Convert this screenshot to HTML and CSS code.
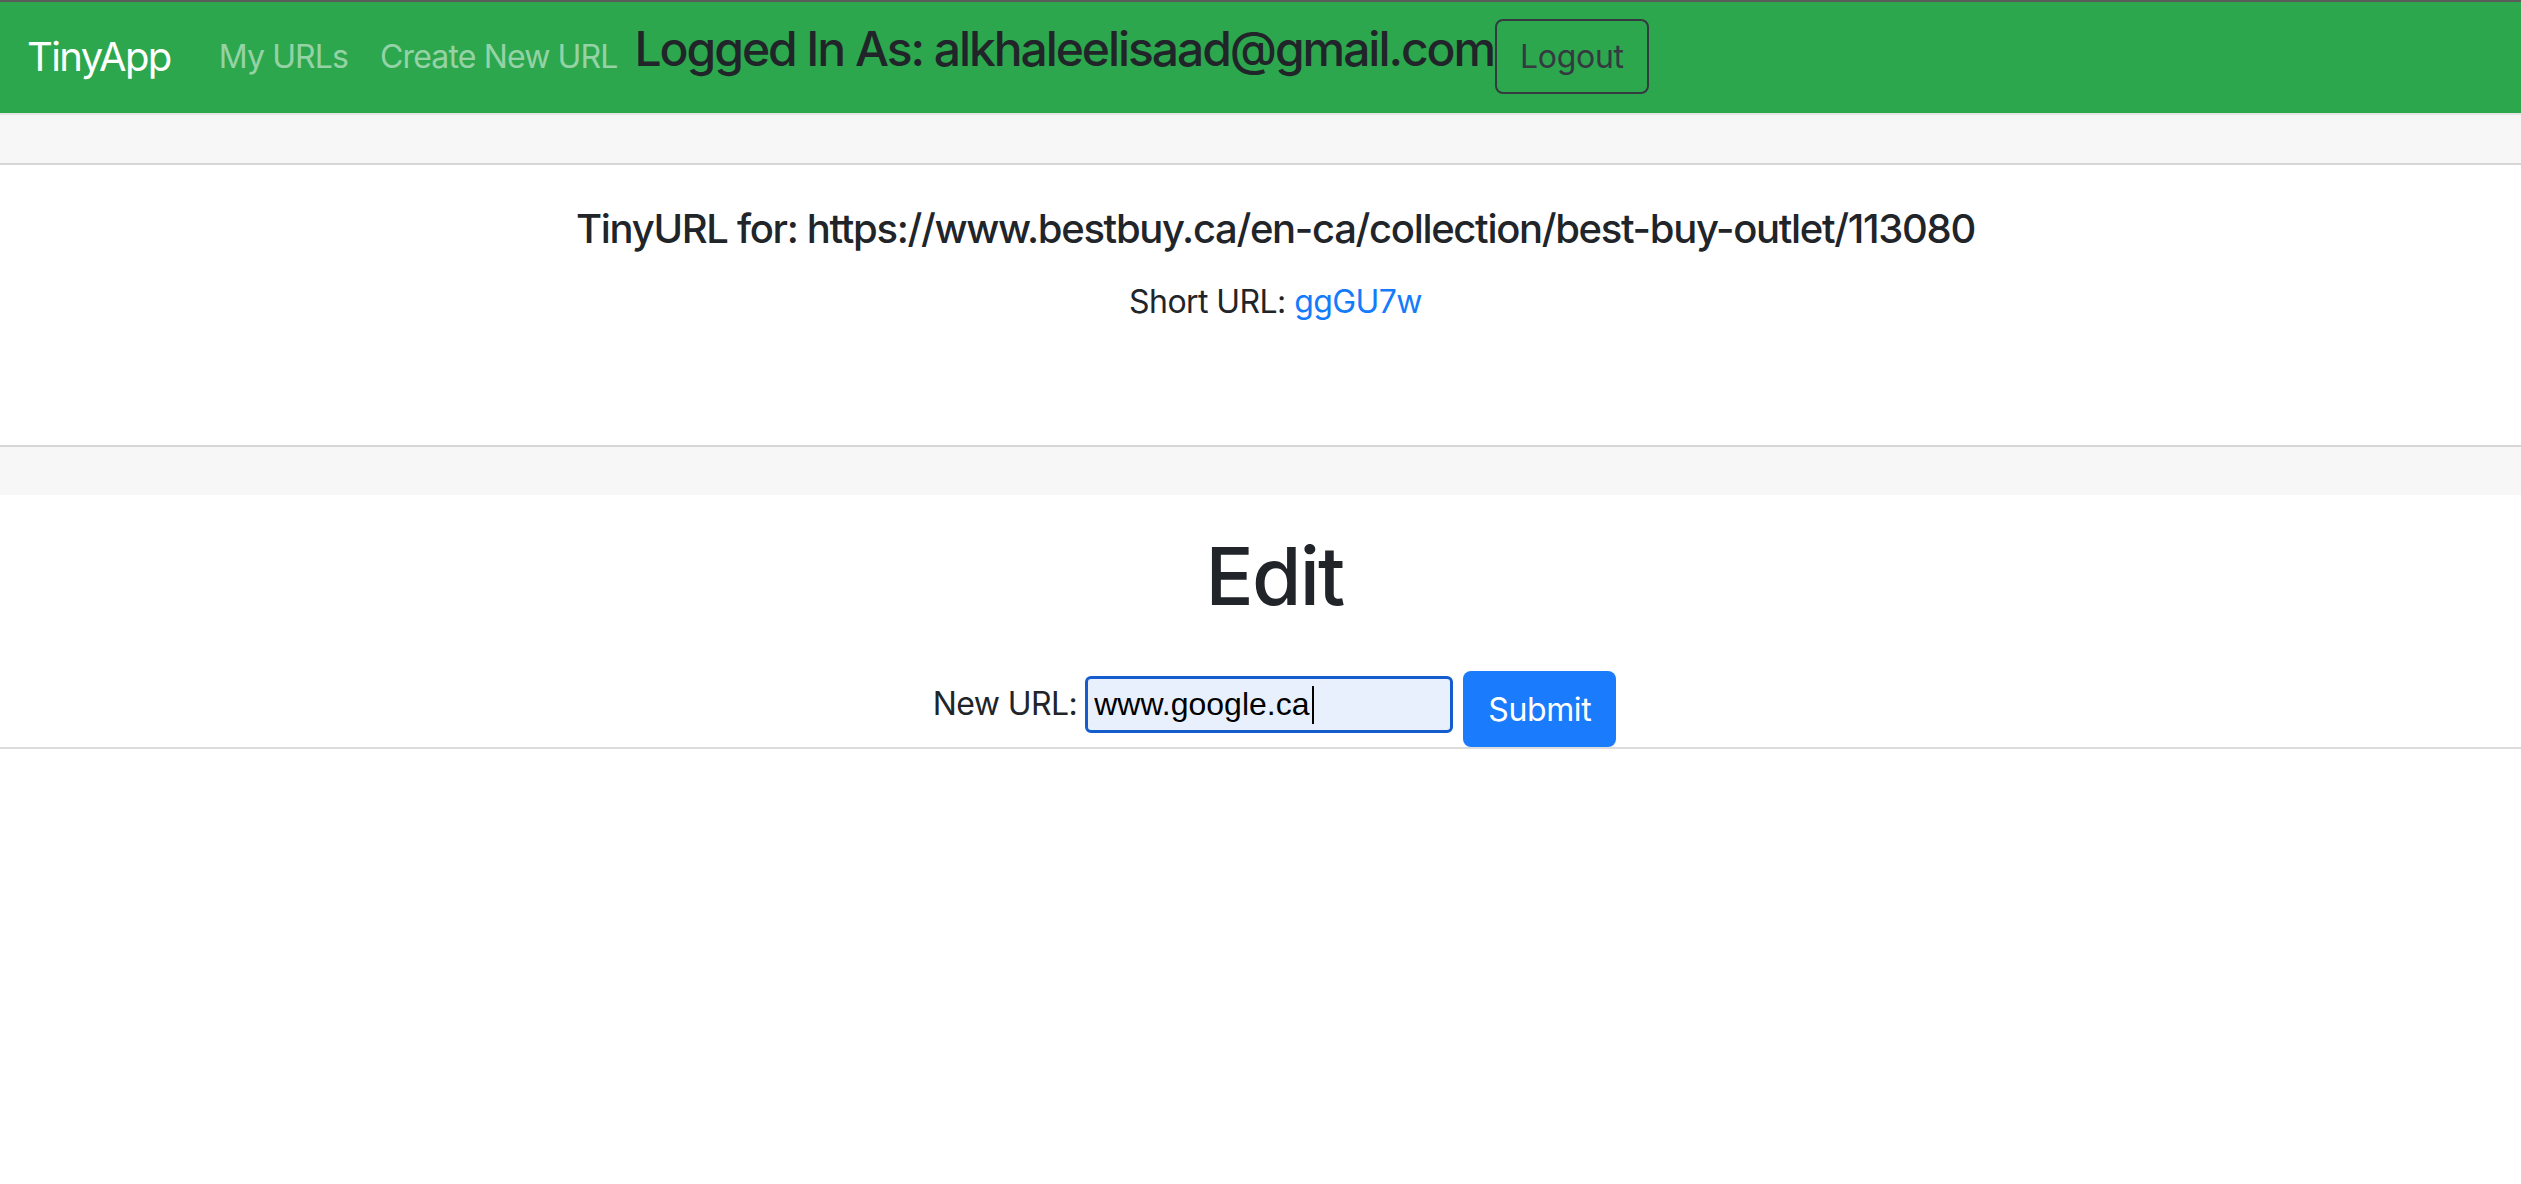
FILE: index.html
```html
<!DOCTYPE html>
<html lang="en">
<head>
<meta charset="utf-8">
<title>TinyApp</title>
<link rel="stylesheet" href="styles.css">
</head>
<body>
<header class="navbar">
  <a class="brand" href="#">TinyApp</a>
  <nav class="nav">
    <a class="nav-link" href="#">My URLs</a>
    <a class="nav-link" href="#">Create New URL</a>
  </nav>
  <h4 class="login">Logged In As: alkhaleelisaad@gmail.com</h4>
  <button class="btn-logout" type="button">Logout</button>
</header>
<main class="card">
  <div class="card-header"></div>
  <div class="card-body">
    <h5 class="card-title">TinyURL for: https://www.bestbuy.ca/en-ca/collection/best-buy-outlet/113080</h5>
    <p class="card-text">Short URL: <a class="short-link" href="#">ggGU7w</a></p>
  </div>
  <div class="card-footer"></div>
  <section class="edit">
    <h1 class="edit-title">Edit</h1>
    <form class="edit-form">
      <label class="edit-label" for="longURL">New URL:</label>
      <span class="input-wrap">
        <input class="url-input" id="longURL" type="text" name="longURL" value="www.google.ca">
        <span class="caret"></span>
      </span>
      <button class="btn-submit" type="submit">Submit</button>
    </form>
  </section>
</main>
</body>
</html>
```
FILE: styles.css
```css
* { box-sizing: border-box; }
html, body { margin: 0; padding: 0; background: #fff; }
body {
  font-family: Inter, "Liberation Sans", Arial, sans-serif;
  color: #212529;
  width: 2521px;
}
a { text-decoration: none; }

.navbar {
  display: flex;
  align-items: flex-start;
  height: 113px;
  border-top: 2px solid #5b5b5b;
  background: #2ca74d;
  padding-left: 27px;
}
.brand {
  margin-top: 25px;
  font-size: 40px;
  line-height: 60px;
  letter-spacing: -0.04em;
  color: #fff;
  margin-right: 32px;
}
.nav { display: flex; margin-top: 31px; }
.nav-link {
  font-size: 32px;
  line-height: 48px;
  letter-spacing: -0.027em;
  color: rgba(255,255,255,0.5);
  padding: 0 16px;
}
.login {
  margin: 18px 0 0 1px;
  font-size: 48px;
  line-height: 57.6px;
  font-weight: 500;
  letter-spacing: -0.043em;
  color: #212529;
}
.btn-logout {
  margin: 17px 0 0 1px;
  height: 75px;
  padding: 0 23px;
  font-family: inherit;
  font-size: 32px;
  line-height: 48px;
  letter-spacing: -0.01em;
  color: #343a40;
  background: transparent;
  border: 2px solid #343a40;
  border-radius: 8px;
}

.card {
  display: block;
  border-top: 2px solid #e4e4e4;
  border-bottom: 2px solid #dcdcdc;
}
.card-header {
  height: 50px;
  background: #f7f7f7;
  border-bottom: 2px solid #d6d6d6;
}
.card-body {
  padding: 40px 40px 119px 70px;
  text-align: center;
}
.card-title {
  margin: 0 0 25px;
  font-size: 40px;
  line-height: 48px;
  font-weight: 500;
  letter-spacing: -0.033em;
}
.card-text {
  margin: 0;
  font-size: 32px;
  line-height: 48px;
  letter-spacing: -0.018em;
}
.short-link { color: #147bfb; }
.card-footer {
  height: 50px;
  background: #f7f7f7;
  border-top: 2px solid #d6d6d6;
}

.edit { padding: 33px 0 0 28px; text-align: center; }
.edit-title {
  margin: 0 0 47px;
  font-size: 80px;
  line-height: 96px;
  font-weight: 500;
  letter-spacing: -0.022em;
}
.edit-form {
  display: flex;
  justify-content: center;
  align-items: flex-start;
  height: 76px;
}
.edit-label {
  margin-top: 9px;
  margin-right: 8px;
  font-size: 32px;
  line-height: 48px;
  letter-spacing: -0.018em;
}
.input-wrap { position: relative; margin-top: 5px; margin-right: 10px; }
.url-input {
  display: block;
  width: 368px;
  height: 57px;
  padding: 0 6px;
  border: 3px solid #155ccc;
  border-radius: 6px;
  background: #e8f0fe;
  font-family: "Liberation Sans", Arial, sans-serif;
  font-size: 32px;
  color: #000;
  outline: none;
}
.caret {
  position: absolute;
  left: 227px;
  top: 10px;
  width: 2px;
  height: 38px;
  background: #000;
}
.btn-submit {
  height: 76px;
  padding: 0 25px;
  border: none;
  border-radius: 8px;
  background: #1a7bfc;
  color: #fff;
  font-family: inherit;
  font-size: 32px;
  letter-spacing: -0.012em;
}
```
